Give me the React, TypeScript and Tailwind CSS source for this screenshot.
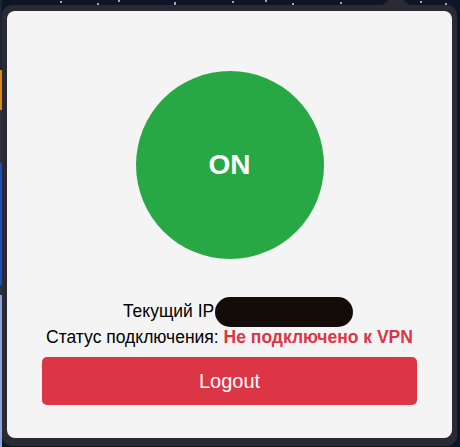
const stars = [
  { x: 60, y: 1 }, { x: 97, y: 3 }, { x: 118, y: 0 }, { x: 174, y: 2 }, { x: 232, y: 1 },
  { x: 265, y: 0 }, { x: 292, y: 3 }, { x: 340, y: 2 }, { x: 174, y: 4 }, { x: 420, y: 1 }, { x: 445, y: 3 },
];

export default function App() {
  return (
    <div className="relative h-[447px] w-[460px] overflow-hidden bg-[#0c1626] font-['Liberation_Sans',Arial,sans-serif]">
      {stars.map((s, i) => (
        <span
          key={i}
          className="absolute h-[2px] w-[2px] rounded-full bg-[#c9d6ea]"
          style={{ left: s.x, top: s.y }}
        />
      ))}

      {/* left edge of the page behind the popup */}
      <div className="absolute left-0 top-0 flex h-full w-[2px] flex-col">
        <div className="h-[70px] bg-[#1a2436]" />
        <div className="h-[40px] bg-[#d58a1c]" />
        <div className="h-[53px] bg-[#2a3140]" />
        <div className="h-[122px] bg-[#1d4fb8]" />
        <div className="h-[10px] bg-[#2a3140]" />
        <div className="flex-1 bg-[#8aa6d6]" />
      </div>

      {/* popup arrow */}
      <svg className="absolute left-[381px] top-0" width="30" height="6" viewBox="0 0 30 6">
        <polygon points="0,6 8,0 22,0 30,6" fill="#2b2a33" />
      </svg>

      <div className="relative ml-[2px] mt-[5px] h-[441px] w-[455px] rounded-[10px] bg-[#2b2a33] pb-[8px] pl-[5px] pr-[5px] pt-[6px]">
        <div className="flex h-full flex-col items-center rounded-[8px] bg-[#f4f4f4] pt-[60px] text-black">
          <div className="flex h-[188px] w-[188px] items-center justify-center rounded-full bg-[#28a745] text-[28px] font-bold text-white">
            ON
          </div>

          <p className="mt-[42px] text-[17.5px] leading-[20px]">
            Текущий IP:
            <span className="relative inline-block h-[20px] w-[117px] align-top">
              {/* redaction over the address */}
              <span className="absolute -left-[4px] -top-[4px] h-[30px] w-[138px] rounded-full bg-[#140c08]" />
            </span>
          </p>
          <p className="mt-[6px] text-[17.5px] leading-[20px]">
            Статус подключения: <span className="font-bold text-[#dc3545]">Не подключено к VPN</span>
          </p>

          <button
            type="button"
            className="mt-[10px] h-[48px] w-[375px] rounded-[5px] bg-[#dc3545] text-[20px] text-white"
          >
            Logout
          </button>
        </div>
      </div>
    </div>
  );
}
